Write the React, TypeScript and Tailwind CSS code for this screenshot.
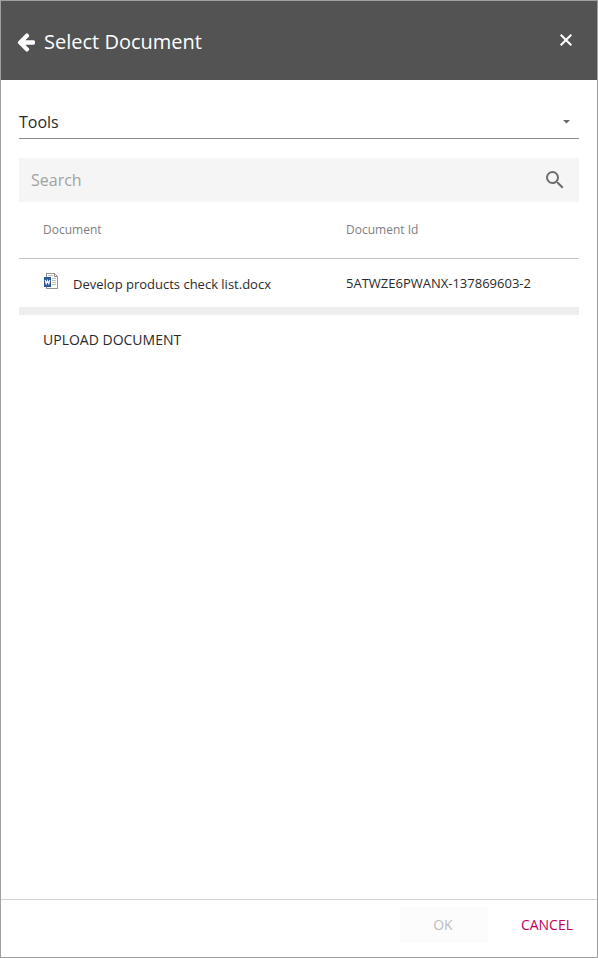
import React from "react";
import { MdSearch } from "react-icons/md";

function ArrowLeft() {
  return (
    <svg className="h-[19px] w-[18px]" viewBox="0 -96 1536 1600" fill="currentColor">
      <path d="M1536 640v128q0 53-32.5 90.5t-84.5 37.5h-704l293 294q38 36 38 90t-38 90l-75 76q-37 37-90 37-52 0-91-37l-651-652q-37-37-37-90 0-52 37-91l651-650q38-38 91-38 52 0 90 38l75 74q38 38 38 91t-38 91l-293 293h704q52 0 84.5 37.5t32.5 90.5z" />
    </svg>
  );
}

function WordIcon() {
  return (
    <svg className="h-4 w-[15px]" viewBox="0 0 15 16" shapeRendering="crispEdges">
      <path d="M2 0h9v1h1v1h1v1h1v13H2z" fill="#969696" />
      <path d="M3 1h7v3h3v11H3z" fill="#fff" />
      <path d="M11 2h1v1h-1z" fill="#fff" />
      <path d="M4 2h5v1H4zM8 5h4v1H8zM8 7h4v1H8zM8 9h4v1H8zM8 11h4v1H8z" fill="#c0c0c0" />
      <path d="M0 4h7v10H0z" fill="#2b579a" />
      <path d="M1.2 7l1 3.700L3.500 7.500l1.300 3.200L5.800 7" fill="none" stroke="#fff" strokeWidth="1.100" shapeRendering="auto" />
    </svg>
  );
}

export default function App() {
  return (
    <div className="flex h-[958px] w-[598px] flex-col border border-[#a0a0a0] bg-white font-['Open_Sans',sans-serif] text-[#2a2a2a]">
      <header className="flex h-[79px] shrink-0 items-center bg-[#535353] pl-4 pr-[25px] text-white">
        <button className="mt-1" aria-label="Back"><ArrowLeft /></button>
        <h1 className="ml-[9px] mt-[3px] flex-1 text-[20px] leading-7">Select Document</h1>
        <button className="-mt-[2px]" aria-label="Close">
          <svg className="h-3 w-3" viewBox="0 0 12 12" fill="none" stroke="currentColor" strokeWidth="2">
            <path d="M0.700 0.700l10.600 10.600M11.300 0.700L0.700 11.300" />
          </svg>
        </button>
      </header>

      <main className="flex flex-1 flex-col px-[18px] pt-[25px]">
        <div className="flex h-[34px] items-center justify-between border-b border-[#8c8c8c] pr-[9px]">
          <span className="text-base leading-6">Tools</span>
          <svg className="mt-px h-[3.5px] w-[7px]" viewBox="0 0 8 4" fill="#6a6a6a"><path d="M0 0h8L4 4z" /></svg>
        </div>

        <div className="mt-[19px] flex h-11 shrink-0 items-center justify-between bg-[#f5f5f5] px-3">
          <span className="text-base leading-6 text-[#a2a2a2]">Search</span>
          <MdSearch className="h-6 w-6 text-[#6e6e6e]" />
        </div>

        <div className="grid h-[57px] shrink-0 grid-cols-[303px_1fr] items-center border-b border-[#c4c4c4] pl-6 text-xs text-[#808080]">
          <span>Document</span>
          <span>Document Id</span>
        </div>
        <div className="grid h-12 shrink-0 grid-cols-[303px_1fr] items-center pl-6">
          <div className="flex items-center">
            <span className="-mt-1 ml-px"><WordIcon /></span>
            <span className="ml-[14px] mt-px text-[13px] leading-5">Develop products check list.docx</span>
          </div>
          <span className="-mt-px text-[13px] leading-5">5ATWZE6PWANX-137869603-2</span>
        </div>
        <div className="h-2 shrink-0 bg-[#eee]" />
        <button className="ml-6 mt-[15px] self-start text-sm leading-5">UPLOAD DOCUMENT</button>
      </main>

      <footer className="flex h-[58px] shrink-0 justify-end border-t border-[#d2d2d2] pr-6 pt-[7px]">
        <button className="h-9 w-[88px] bg-[#fcfcfc] pr-0.5 text-sm text-[#bdbdbd]" disabled>OK</button>
        <button className="ml-[33px] h-9 text-sm text-[#c2005d]">CANCEL</button>
      </footer>
    </div>
  );
}
